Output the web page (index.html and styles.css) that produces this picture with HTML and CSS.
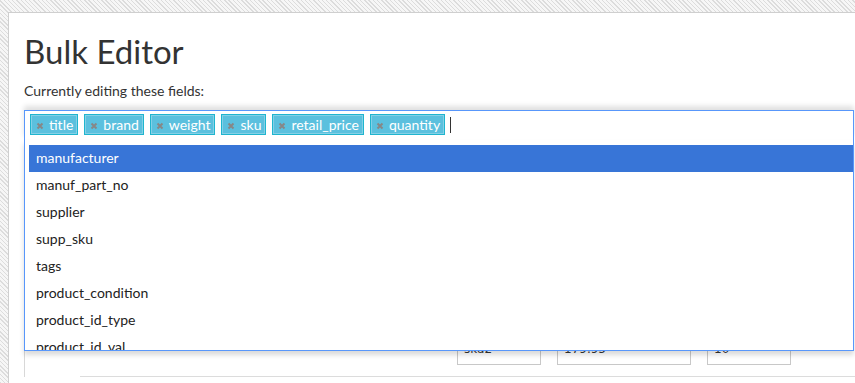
FILE: index.html
```html
<!DOCTYPE html>
<html lang="en">
  <head>
    <meta charset="UTF-8" />
    <meta name="viewport" content="width=device-width, initial-scale=1.0" />
    <title>Bulk Editor</title>
    <link rel="stylesheet" href="styles.css">
  </head>
  <body>
    <div class="panel">
      <h1>Bulk Editor</h1>
      <p class="hint">Currently editing these fields:</p>

      <div class="picker">
        <ul class="choices">
          <li class="tag"><span class="tag-x"><svg width="8" height="8" viewBox="0 0 8 8"><path d="M1.5 1.5L6.5 6.5M6.5 1.5L1.5 6.5"/></svg></span>title</li>
          <li class="tag"><span class="tag-x"><svg width="8" height="8" viewBox="0 0 8 8"><path d="M1.5 1.5L6.5 6.5M6.5 1.5L1.5 6.5"/></svg></span>brand</li>
          <li class="tag"><span class="tag-x"><svg width="8" height="8" viewBox="0 0 8 8"><path d="M1.5 1.5L6.5 6.5M6.5 1.5L1.5 6.5"/></svg></span>weight</li>
          <li class="tag"><span class="tag-x"><svg width="8" height="8" viewBox="0 0 8 8"><path d="M1.5 1.5L6.5 6.5M6.5 1.5L1.5 6.5"/></svg></span>sku</li>
          <li class="tag"><span class="tag-x"><svg width="8" height="8" viewBox="0 0 8 8"><path d="M1.5 1.5L6.5 6.5M6.5 1.5L1.5 6.5"/></svg></span>retail_price</li>
          <li class="tag"><span class="tag-x"><svg width="8" height="8" viewBox="0 0 8 8"><path d="M1.5 1.5L6.5 6.5M6.5 1.5L1.5 6.5"/></svg></span>quantity</li>
          <li class="caret"></li>
        </ul>

        <div class="dropdown">
          <ul class="results">
            <li class="active">manufacturer</li>
            <li>manuf_part_no</li>
            <li>supplier</li>
            <li>supp_sku</li>
            <li>tags</li>
            <li>product_condition</li>
            <li>product_id_type</li>
            <li>product_id_val</li>
            <li>product_notes</li>
          </ul>
        </div>
      </div>

      <div class="grid">
        <div class="row">
          <input class="cell small" value="sku2" />
          <input class="cell wide" value="179.95" />
          <input class="cell small" value="10" />
        </div>
      </div>
    </div>
  </body>
</html>
```

FILE: styles.css
```css
* {
  box-sizing: border-box;
}
body {
  margin: 0;
  overflow: hidden;
  font-family: "Lato", "Liberation Sans", sans-serif;
  color: #333;
  background: repeating-linear-gradient(
    45deg,
    #dcdcdc 0,
    #dcdcdc 1px,
    #f6f6f6 1px,
    #f6f6f6 3px
  );
  height: 383px;
}
.panel {
  margin: 12px 0 0 8px;
  width: 900px;
  min-height: 400px;
  background: #fff;
  border: 1px solid #cfcfcf;
  padding: 0 15px;
}
h1 {
  margin: 0;
  padding-top: 18px;
  font-size: 33px;
  font-weight: 400;
  line-height: 40px;
  color: #333;
}
.hint {
  margin: 11px 0 0;
  font-size: 14px;
  line-height: 18px;
}
.picker {
  position: relative;
  margin-top: 10px;
  width: 830px;
}
.choices {
  list-style: none;
  margin: 0;
  padding: 3px 5px 5px;
  display: flex;
  align-items: center;
  gap: 6px;
  border: 1px solid #5897fb;
  border-bottom: none;
  background: #fff;
  box-shadow: 0 -4px 5px rgba(0, 0, 0, 0.12);
  height: 30px;
}
.tag {
  display: flex;
  align-items: center;
  height: 21px;
  padding: 0 4px 0 5px;
  background: #5bc0de;
  border: 1px solid #1fb5cf;
  box-shadow: inset 0 0 0 1px rgba(255, 255, 255, 0.25);
  color: #fff;
  font-size: 14px;
  line-height: 19px;
}
.tag-x {
  display: flex;
  margin-right: 5px;
  margin-top: 2px;
}
.tag-x svg path {
  stroke: #878787;
  stroke-width: 2;
}
.caret {
  width: 1px;
  height: 16px;
  margin-left: -1px;
  background: #333;
}
.dropdown {
  position: absolute;
  top: 100%;
  left: 0;
  right: 0;
  z-index: 10;
  background: #fff;
  border: 1px solid #5897fb;
  border-top: none;
  padding: 5px 0 0 4px;
  box-shadow: 0 4px 5px rgba(0, 0, 0, 0.15);
}
.results {
  list-style: none;
  margin: 0;
  padding: 0;
  height: 205px;
  overflow: hidden;
}
.results li {
  height: 27px;
  line-height: 26px;
  padding-left: 7px;
  font-size: 14px;
  color: #222;
}
.results li.active {
  background: #3875d7;
  color: #fff;
}
.grid {
  border-left: 1px solid #d8d8d8;
  padding-top: 197px;
}
.row {
  display: flex;
  margin-left: 55px;
  padding: 0 0 11px 377px;
  border-bottom: 1px solid #dcdcdc;
}
.cell {
  height: 28px;
  border: 1px solid #c8c8c8;
  font-family: "DejaVu Sans", sans-serif;
  font-size: 12px;
  color: #333;
  padding: 0 6px 5px;
}
.small {
  width: 84px;
}
.wide {
  width: 134px;
  margin: 0 16px;
}
```
